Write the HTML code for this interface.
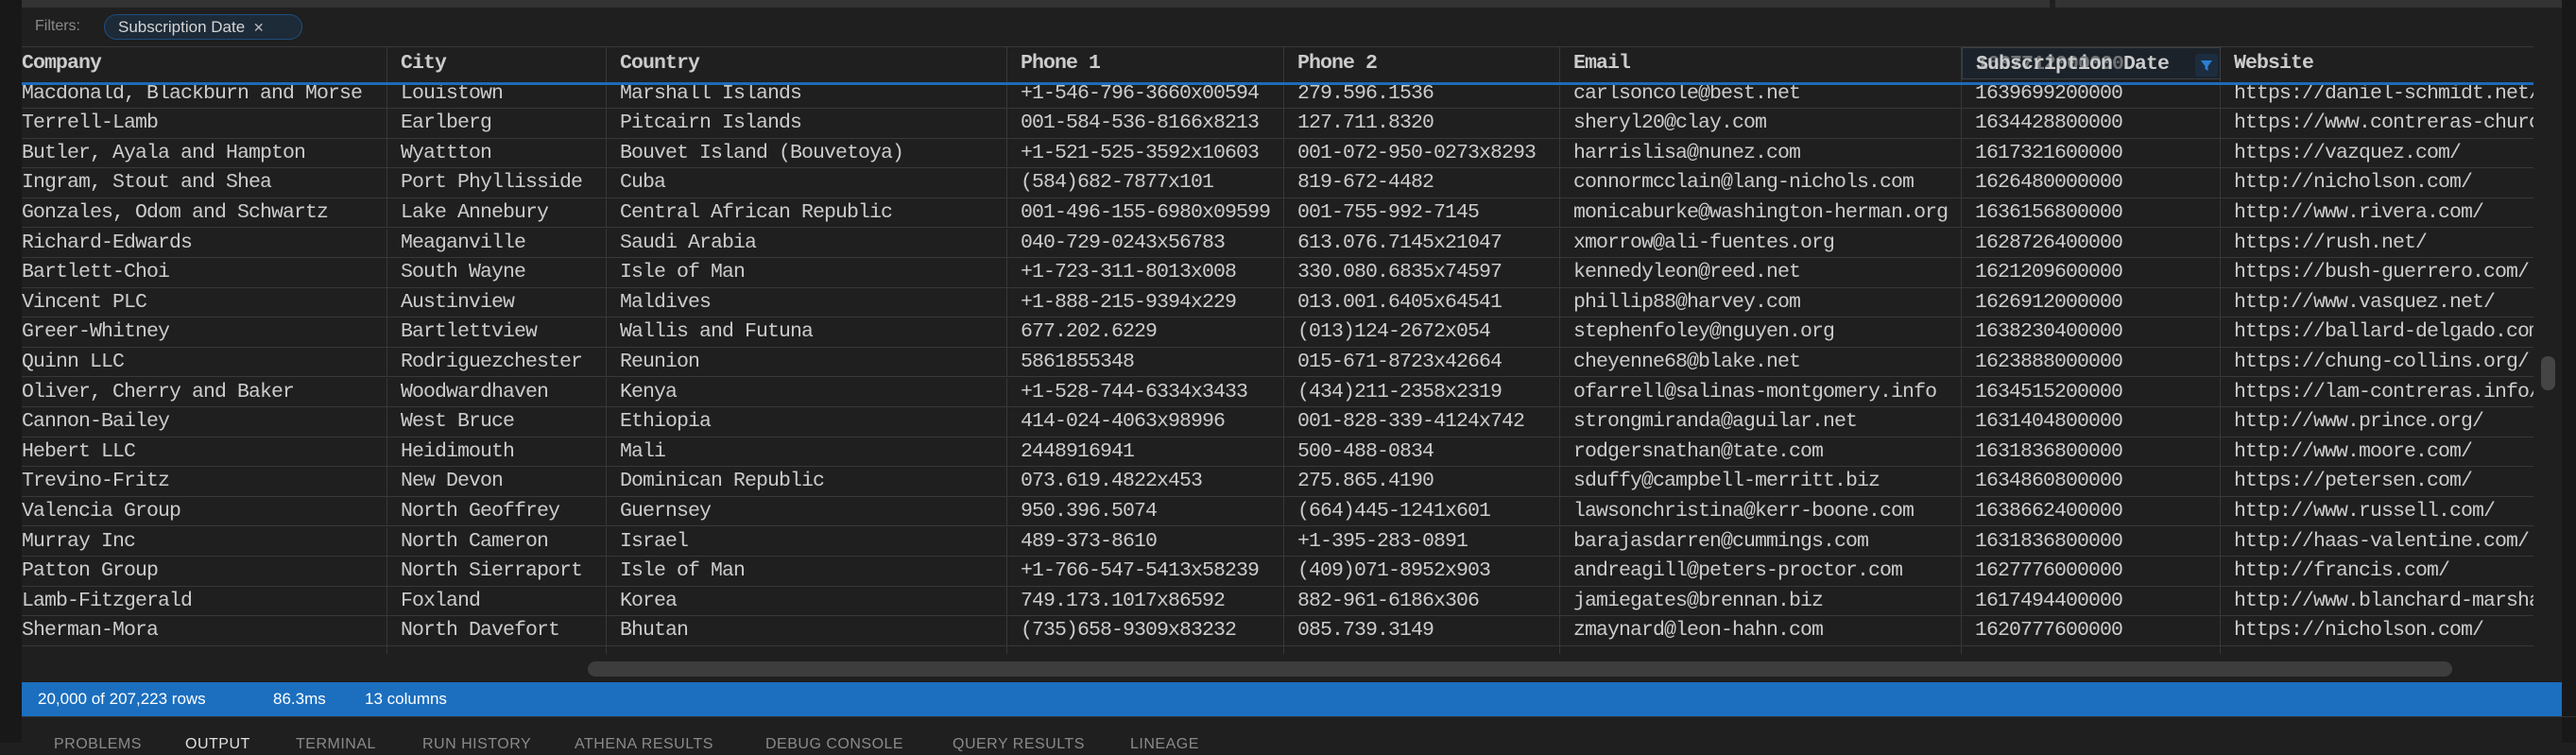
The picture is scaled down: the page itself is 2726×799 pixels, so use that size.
<!DOCTYPE html>
<html><head><meta charset="utf-8"><style>
*{margin:0;padding:0;box-sizing:border-box}
body{width:2726px;height:786px;background:#1f1f1f;overflow:hidden;position:relative;font-family:"Liberation Mono",monospace;color:#cccccc}
.abs{position:absolute}
.row{position:absolute;left:23px;height:31.6px;width:2658px;border-bottom:1px solid #383838;display:flex}
.c{height:100%;overflow:hidden;white-space:nowrap;font-size:21.5px;letter-spacing:-0.9px;line-height:31px;padding-left:14px;border-right:1px solid #383838;flex:none}
.c0{width:387px;padding-left:0}.c1{width:232px}.c2{width:424px}.c3{width:293px}.c4{width:292px}.c5{width:425px}.c6{width:274px}.c7{width:331px;border-right:none}
.hdr .c{font-weight:bold;line-height:34px}
.sans{font-family:"Liberation Sans",sans-serif}
</style></head><body>
<div class="abs" style="left:0;top:0;width:23px;height:786px;background:#181818"></div>
<div class="abs" style="left:2711px;top:0;width:15px;height:786px;background:#181818"></div>
<div class="abs" style="left:23px;top:0;width:2146px;height:8px;background:#333"></div>
<div class="abs" style="left:2175px;top:0;width:536px;height:8px;background:#333"></div>
<div class="abs sans" style="left:37px;top:19px;font-size:16px;color:#8a8a8a">Filters:</div>
<div class="abs sans" style="left:110px;top:15px;width:210px;height:27px;border:1px solid #1e4f7d;border-radius:14px;background:#1d2a38;font-size:17px;color:#d4d4d4;line-height:25px;padding-left:14px">Subscription Date <span style="font-size:14px;color:#bbb;margin-left:4px">✕</span></div>
<div class="abs" style="left:23px;top:49px;width:2658px;height:1px;background:#383838"></div>

<div class="row hdr" style="top:50px;height:34px;border-bottom:none">
<div class="c c0">Company</div><div class="c c1">City</div><div class="c c2">Country</div><div class="c c3">Phone 1</div><div class="c c4">Phone 2</div><div class="c c5">Email</div><div class="c c6" style="background:#1b222a;position:relative;border:1px solid #3a3f45"><span style="position:absolute;left:14px;color:#aaa;opacity:.6">1637712000000</span><span style="position:relative">Subscription Date</span><div style="position:absolute;left:246px;top:6px;width:24px;height:24px;background:#1c2d3f;border-radius:3px"><svg width="24" height="24" viewBox="0 0 24 24"><path d="M6 7h12l-4.5 6v5l-3-2v-3z" fill="#2a7fd4"/></svg></div></div><div class="c c7">Website</div>
</div>

<div class="row" style="top:83.5px"><div class="c c0">Macdonald, Blackburn and Morse</div><div class="c c1">Louistown</div><div class="c c2">Marshall Islands</div><div class="c c3">+1-546-796-3660x00594</div><div class="c c4">279.596.1536</div><div class="c c5">carlsoncole@best.net</div><div class="c c6">1639699200000</div><div class="c c7">https://daniel-schmidt.net/</div></div>
<div class="row" style="top:115.1px"><div class="c c0">Terrell-Lamb</div><div class="c c1">Earlberg</div><div class="c c2">Pitcairn Islands</div><div class="c c3">001-584-536-8166x8213</div><div class="c c4">127.711.8320</div><div class="c c5">sheryl20@clay.com</div><div class="c c6">1634428800000</div><div class="c c7">https://www.contreras-church.com/</div></div>
<div class="row" style="top:146.7px"><div class="c c0">Butler, Ayala and Hampton</div><div class="c c1">Wyattton</div><div class="c c2">Bouvet Island (Bouvetoya)</div><div class="c c3">+1-521-525-3592x10603</div><div class="c c4">001-072-950-0273x8293</div><div class="c c5">harrislisa@nunez.com</div><div class="c c6">1617321600000</div><div class="c c7">https://vazquez.com/</div></div>
<div class="row" style="top:178.3px"><div class="c c0">Ingram, Stout and Shea</div><div class="c c1">Port Phyllisside</div><div class="c c2">Cuba</div><div class="c c3">(584)682-7877x101</div><div class="c c4">819-672-4482</div><div class="c c5">connormcclain@lang-nichols.com</div><div class="c c6">1626480000000</div><div class="c c7">http://nicholson.com/</div></div>
<div class="row" style="top:209.9px"><div class="c c0">Gonzales, Odom and Schwartz</div><div class="c c1">Lake Annebury</div><div class="c c2">Central African Republic</div><div class="c c3">001-496-155-6980x09599</div><div class="c c4">001-755-992-7145</div><div class="c c5">monicaburke@washington-herman.org</div><div class="c c6">1636156800000</div><div class="c c7">http://www.rivera.com/</div></div>
<div class="row" style="top:241.5px"><div class="c c0">Richard-Edwards</div><div class="c c1">Meaganville</div><div class="c c2">Saudi Arabia</div><div class="c c3">040-729-0243x56783</div><div class="c c4">613.076.7145x21047</div><div class="c c5">xmorrow@ali-fuentes.org</div><div class="c c6">1628726400000</div><div class="c c7">https://rush.net/</div></div>
<div class="row" style="top:273.1px"><div class="c c0">Bartlett-Choi</div><div class="c c1">South Wayne</div><div class="c c2">Isle of Man</div><div class="c c3">+1-723-311-8013x008</div><div class="c c4">330.080.6835x74597</div><div class="c c5">kennedyleon@reed.net</div><div class="c c6">1621209600000</div><div class="c c7">https://bush-guerrero.com/</div></div>
<div class="row" style="top:304.7px"><div class="c c0">Vincent PLC</div><div class="c c1">Austinview</div><div class="c c2">Maldives</div><div class="c c3">+1-888-215-9394x229</div><div class="c c4">013.001.6405x64541</div><div class="c c5">phillip88@harvey.com</div><div class="c c6">1626912000000</div><div class="c c7">http://www.vasquez.net/</div></div>
<div class="row" style="top:336.3px"><div class="c c0">Greer-Whitney</div><div class="c c1">Bartlettview</div><div class="c c2">Wallis and Futuna</div><div class="c c3">677.202.6229</div><div class="c c4">(013)124-2672x054</div><div class="c c5">stephenfoley@nguyen.org</div><div class="c c6">1638230400000</div><div class="c c7">https://ballard-delgado.com/</div></div>
<div class="row" style="top:367.9px"><div class="c c0">Quinn LLC</div><div class="c c1">Rodriguezchester</div><div class="c c2">Reunion</div><div class="c c3">5861855348</div><div class="c c4">015-671-8723x42664</div><div class="c c5">cheyenne68@blake.net</div><div class="c c6">1623888000000</div><div class="c c7">https://chung-collins.org/</div></div>
<div class="row" style="top:399.5px"><div class="c c0">Oliver, Cherry and Baker</div><div class="c c1">Woodwardhaven</div><div class="c c2">Kenya</div><div class="c c3">+1-528-744-6334x3433</div><div class="c c4">(434)211-2358x2319</div><div class="c c5">ofarrell@salinas-montgomery.info</div><div class="c c6">1634515200000</div><div class="c c7">https://lam-contreras.info/</div></div>
<div class="row" style="top:431.1px"><div class="c c0">Cannon-Bailey</div><div class="c c1">West Bruce</div><div class="c c2">Ethiopia</div><div class="c c3">414-024-4063x98996</div><div class="c c4">001-828-339-4124x742</div><div class="c c5">strongmiranda@aguilar.net</div><div class="c c6">1631404800000</div><div class="c c7">http://www.prince.org/</div></div>
<div class="row" style="top:462.7px"><div class="c c0">Hebert LLC</div><div class="c c1">Heidimouth</div><div class="c c2">Mali</div><div class="c c3">2448916941</div><div class="c c4">500-488-0834</div><div class="c c5">rodgersnathan@tate.com</div><div class="c c6">1631836800000</div><div class="c c7">http://www.moore.com/</div></div>
<div class="row" style="top:494.3px"><div class="c c0">Trevino-Fritz</div><div class="c c1">New Devon</div><div class="c c2">Dominican Republic</div><div class="c c3">073.619.4822x453</div><div class="c c4">275.865.4190</div><div class="c c5">sduffy@campbell-merritt.biz</div><div class="c c6">1634860800000</div><div class="c c7">https://petersen.com/</div></div>
<div class="row" style="top:525.9px"><div class="c c0">Valencia Group</div><div class="c c1">North Geoffrey</div><div class="c c2">Guernsey</div><div class="c c3">950.396.5074</div><div class="c c4">(664)445-1241x601</div><div class="c c5">lawsonchristina@kerr-boone.com</div><div class="c c6">1638662400000</div><div class="c c7">http://www.russell.com/</div></div>
<div class="row" style="top:557.5px"><div class="c c0">Murray Inc</div><div class="c c1">North Cameron</div><div class="c c2">Israel</div><div class="c c3">489-373-8610</div><div class="c c4">+1-395-283-0891</div><div class="c c5">barajasdarren@cummings.com</div><div class="c c6">1631836800000</div><div class="c c7">http://haas-valentine.com/</div></div>
<div class="row" style="top:589.1px"><div class="c c0">Patton Group</div><div class="c c1">North Sierraport</div><div class="c c2">Isle of Man</div><div class="c c3">+1-766-547-5413x58239</div><div class="c c4">(409)071-8952x903</div><div class="c c5">andreagill@peters-proctor.com</div><div class="c c6">1627776000000</div><div class="c c7">http://francis.com/</div></div>
<div class="row" style="top:620.7px"><div class="c c0">Lamb-Fitzgerald</div><div class="c c1">Foxland</div><div class="c c2">Korea</div><div class="c c3">749.173.1017x86592</div><div class="c c4">882-961-6186x306</div><div class="c c5">jamiegates@brennan.biz</div><div class="c c6">1617494400000</div><div class="c c7">http://www.blanchard-marshall.com/</div></div>
<div class="row" style="top:652.3px"><div class="c c0">Sherman-Mora</div><div class="c c1">North Davefort</div><div class="c c2">Bhutan</div><div class="c c3">(735)658-9309x83232</div><div class="c c4">085.739.3149</div><div class="c c5">zmaynard@leon-hahn.com</div><div class="c c6">1620777600000</div><div class="c c7">https://nicholson.com/</div></div>
<div class="row" style="top:684px;height:8px;border-bottom:none"><div class="c c0"></div><div class="c c1"></div><div class="c c2"></div><div class="c c3"></div><div class="c c4"></div><div class="c c5"></div><div class="c c6"></div><div class="c c7"></div></div>

<div class="abs" style="left:23px;top:87px;width:2658px;height:3px;background:#1d6ab8"></div>
<div class="abs" style="left:2689px;top:377px;width:15px;height:36px;border-radius:7px;background:#454545"></div>
<div class="abs" style="left:622px;top:700px;width:1973px;height:16px;border-radius:8px;background:#3d3d3d"></div>
<div class="abs sans" style="left:23px;top:722px;width:2688px;height:36px;background:#1c6fbf;color:#fff;font-size:17px;line-height:36px;padding-left:17px"><span>20,000 of 207,223 rows</span><span style="position:absolute;left:266px">86.3ms</span><span style="position:absolute;left:363px">13 columns</span></div>
<div class="abs" style="left:23px;top:758px;width:2703px;height:1px;background:#333"></div>
<div class="abs sans" style="left:0;top:779px;width:2726px;height:20px;font-size:16px;color:#8a8a8a;letter-spacing:0.5px">
<span class="abs" style="left:57px">PROBLEMS</span><span class="abs" style="left:196px;color:#e0e0e0">OUTPUT</span><span class="abs" style="left:313px">TERMINAL</span><span class="abs" style="left:447px">RUN HISTORY</span><span class="abs" style="left:608px">ATHENA RESULTS</span><span class="abs" style="left:810px">DEBUG CONSOLE</span><span class="abs" style="left:1008px">QUERY RESULTS</span><span class="abs" style="left:1196px">LINEAGE</span></div>
</body></html>
